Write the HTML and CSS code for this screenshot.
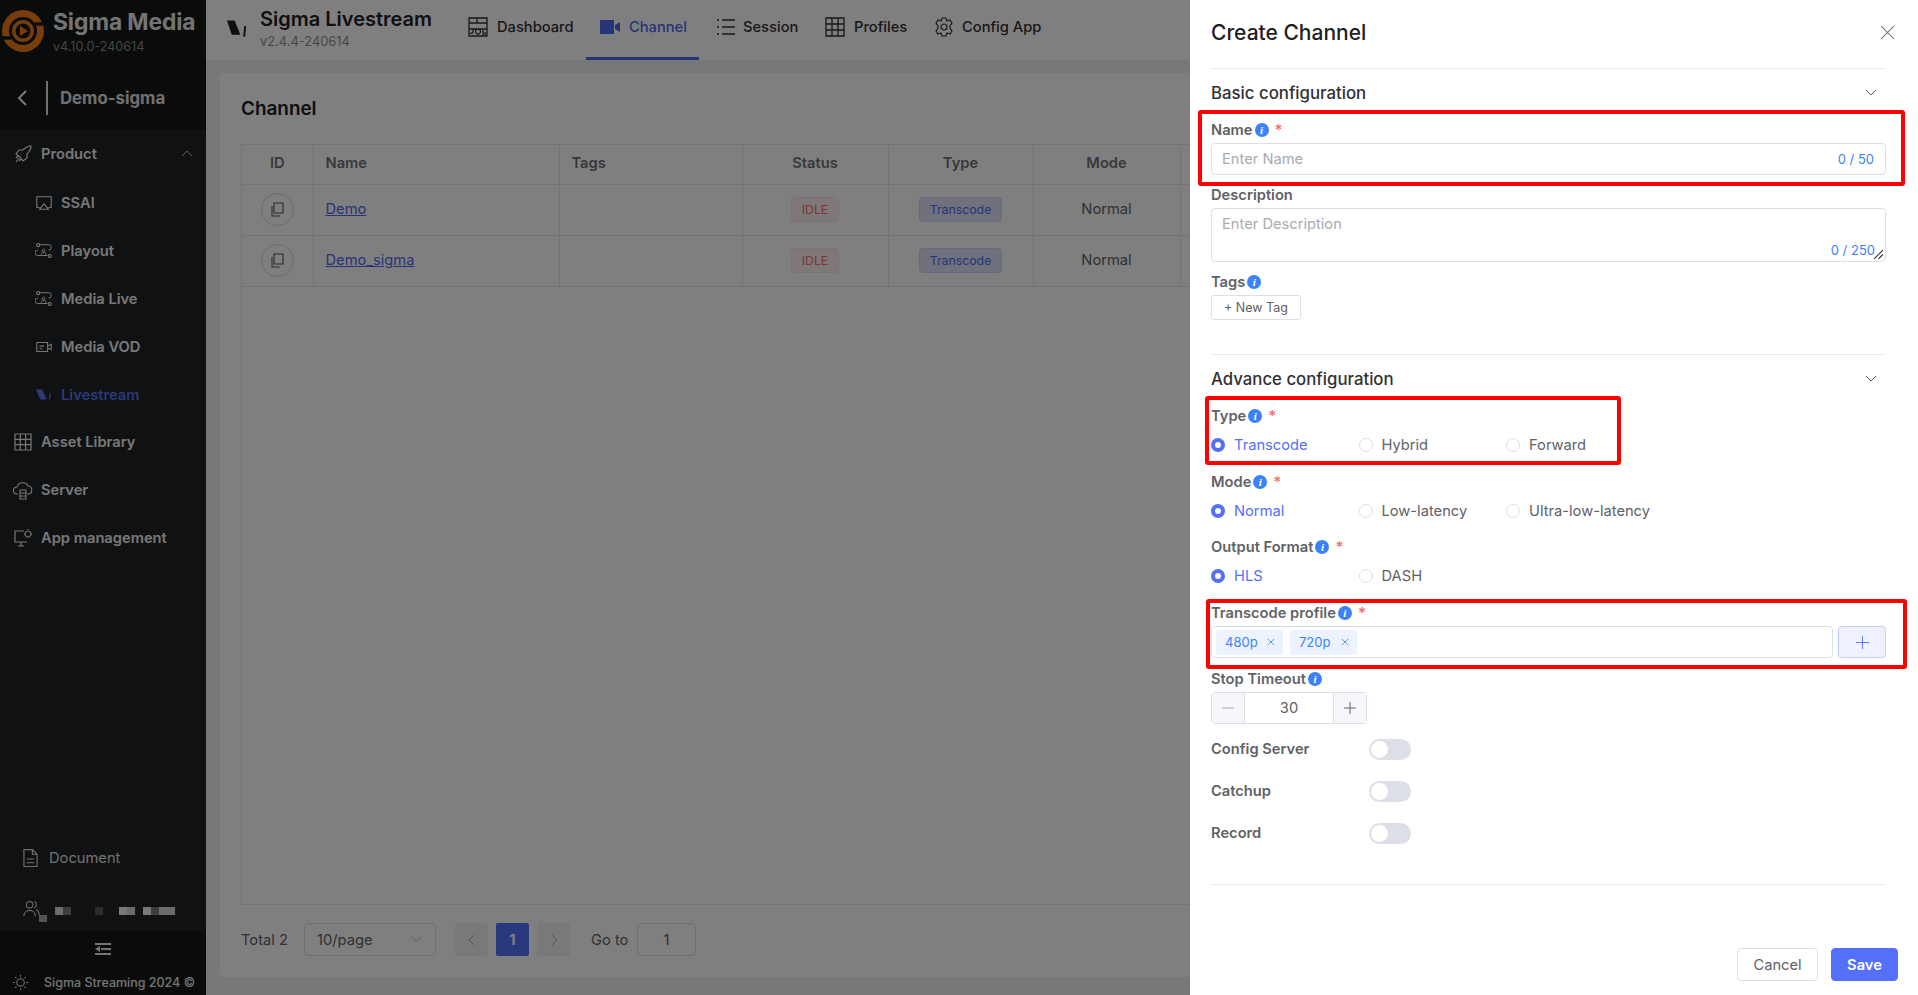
FILE: index.html
```html
<!DOCTYPE html>
<html lang="en">
<head>
<meta charset="utf-8">
<title>Create Channel</title>
<link rel="stylesheet" href="styles.css">
</head>
<body>
<div class="app">
  <aside class="sidebar">
    <div class="side-top">
      <div class="brand">
        <svg class="brand-logo" viewBox="0 0 44 44"><circle cx="22" cy="22" r="21" fill="#f07a1a"/><circle cx="22" cy="22" r="12.500" fill="none" stroke="#141616" stroke-width="3"/><path d="M1 29h9M34 15h9" stroke="#141616" stroke-width="3.500"/><circle cx="22" cy="22" r="7.500" fill="#141616"/><path d="M19 17l8 5-8 5z" fill="#f07a1a"/></svg>
        <div class="brand-text"><div class="brand-name">Sigma Media</div><div class="brand-ver">v4.10.0-240614</div></div>
      </div>
      <div class="back-row">
        <svg class="back-ico" viewBox="0 0 12 18"><path d="M10 2L3 9l7 7" fill="none" stroke="currentColor" stroke-width="2"/></svg>
        <span class="back-sep"></span><span class="back-name">Demo-sigma</span>
      </div>
    </div>
    <nav class="menu">
      <div class="mi head"><svg class="ico" viewBox="0 0 20 20"><path d="M7 13L3 10l3-4h4c2-2 5-4 8-4 0 3-2 6-4 8v4l-4 3-3-4zM6 14l-3 4M5 12l-2 2M8 15l-2 2" fill="none" stroke="currentColor" stroke-width="1.2"/></svg><span class="mi-t">Product</span><svg class="mi-ar" viewBox="0 0 12 8"><path d="M1 6l5-5 5 5" fill="none" stroke="currentColor"/></svg></div>
      <div class="mi sub"><svg class="ico" viewBox="0 0 20 20"><path d="M5 15H2V3h16v12h-3M10 11l5 6H5z" fill="none" stroke="currentColor" stroke-width="1.2"/></svg><span class="mi-t">SSAI</span></div>
      <div class="mi sub"><svg class="ico" viewBox="0 0 20 20"><path d="M5 3h10a3 3 0 0 1 0 6M3 9a3 3 0 0 0 0 6h11M2 2h3v3H2zM15 14h3v3h-3zM7 14c0-4 5-4 5 0M9.500 8a1.500 1.500 0 1 0 .01 0" fill="none" stroke="currentColor" stroke-width="1.100"/></svg><span class="mi-t">Playout</span></div>
      <div class="mi sub"><svg class="ico" viewBox="0 0 20 20"><path d="M5 3h10a3 3 0 0 1 0 6M3 9a3 3 0 0 0 0 6h11M2 2h3v3H2zM15 14h3v3h-3zM7 14c0-4 5-4 5 0M9.500 8a1.500 1.500 0 1 0 .01 0" fill="none" stroke="currentColor" stroke-width="1.100"/></svg><span class="mi-t">Media Live</span></div>
      <div class="mi sub"><svg class="ico" viewBox="0 0 20 20"><path d="M2 5h12v10H2zM14 9l4-2v6l-4-2M5 9h5M5 12h3" fill="none" stroke="currentColor" stroke-width="1.200"/></svg><span class="mi-t">Media VOD</span></div>
      <div class="mi sub active"><svg class="ico" viewBox="0 0 20 20"><path d="M1 4h7l5 11H6z" fill="currentColor"/><path d="M17 8l-1 7" stroke="currentColor" stroke-width="1.500"/></svg><span class="mi-t">Livestream</span></div>
      <div class="mi"><svg class="ico" viewBox="0 0 20 20"><path d="M2 2h16v16H2zM7.300 2v16M12.600 2v16M2 7.300h16M2 12.600h16" fill="none" stroke="currentColor" stroke-width="1.200"/></svg><span class="mi-t">Asset Library</span></div>
      <div class="mi"><svg class="ico" viewBox="0 0 20 20"><path d="M5 14H4a3.500 3.500 0 0 1 0-7c1-5 9-6 11-1 5 0 5 8 0 8h-1M7 10h6v9H7zM7 13h6M7 16h6" fill="none" stroke="currentColor" stroke-width="1.100"/></svg><span class="mi-t">Server</span></div>
      <div class="mi"><svg class="ico" viewBox="0 0 20 20"><path d="M11 3H2v11h12M5 18h6M8 14v4M15 3a3 3 0 1 0 .01 0M15 1v1M15 9v1M11 6h1M18 6h1" fill="none" stroke="currentColor" stroke-width="1.200"/></svg><span class="mi-t">App management</span></div>
    </nav>
    <div class="side-bottom">
      <div class="doc"><svg class="doc-ico" viewBox="0 0 16 20"><path d="M1 1h9l5 5v13H1zM10 1v5h5M4 11h8M4 15h8" fill="none" stroke="currentColor" stroke-width="1.200"/></svg><span>Document</span></div>
      <div class="user">
        <svg class="user-ico" viewBox="0 0 18 18"><circle cx="7" cy="5" r="3.500" fill="none" stroke="currentColor" stroke-width="1.100"/><path d="M1 17c0-8 12-8 12 0M12 1.500c3 1 3 6 0 7M14 10c2 1 3 3 3 6" fill="none" stroke="currentColor" stroke-width="1.100"/></svg>
        <span class="px p0"></span>
        <div class="pixels">
          <span class="px p1"></span><span class="px p2"></span><span class="px gap4"></span><span class="px p3"></span><span class="px gap2"></span><span class="px p4"></span><span class="px p5"></span><span class="px gap1"></span><span class="px p4"></span><span class="px p2"></span><span class="px p5"></span><span class="px p1"></span>
        </div>
      </div>
    </div>
    <div class="side-foot">
      <svg class="collapse" viewBox="0 0 18 14"><path d="M1 1h16v2H1zM1 11h16v2H1zM7 6h10v2H7zM1 7l5-3v6z" fill="currentColor"/></svg>
      <div class="copy">
        <svg class="sun" viewBox="0 0 18 18"><circle cx="9" cy="9" r="4" fill="none" stroke="currentColor" stroke-width="1.100"/><path d="M9 1v2M9 15v2M1 9h2M15 9h2M3.300 3.300l1.400 1.400M13.300 13.300l1.400 1.400M3.300 14.700l1.400-1.400M13.300 4.700l1.400-1.400" stroke="currentColor" stroke-width="1.100"/></svg>
        <span>Sigma Streaming 2024 ©</span>
      </div>
    </div>
  </aside>

  <div class="main">
    <header class="topbar">
      <div class="tb-brand">
        <svg class="tb-logo" viewBox="0 0 22 20"><path d="M0 0h8l6 15H5z" fill="#1d1f22"/><path d="M19 6l-1 11" stroke="#1d1f22" stroke-width="2"/></svg>
        <div><div class="tb-name">Sigma Livestream</div><div class="tb-ver">v2.4.4-240614</div></div>
      </div>
      <nav class="tabs">
        <div class="tab"><svg class="tab-ico" viewBox="0 0 20 20"><path d="M1 1h18v18H1zM1 6h18M9 1v5M1 12h18M5 12v3a2 2 0 0 1-3 1M10 12a2.500 2.500 0 1 0 .01 0M15 13v5M17 15v3" fill="none" stroke="currentColor" stroke-width="1.300"/></svg><span>Dashboard</span></div>
        <div class="tab on"><svg class="tab-ico" viewBox="0 0 20 20"><path d="M0 3h14v14H0zM15 8l5-3v10l-5-3z" fill="currentColor"/></svg><span>Channel</span></div>
        <div class="tab"><svg class="tab-ico" viewBox="0 0 20 20"><path d="M6 3h13M6 10h13M6 17h13M1 3h2M1 10h2M1 17h2" fill="none" stroke="currentColor" stroke-width="1.400"/></svg><span>Session</span></div>
        <div class="tab"><svg class="tab-ico" viewBox="0 0 20 20"><path d="M1 1h18v18H1zM7 1v18M13 1v18M1 7h18M1 13h18" fill="none" stroke="currentColor" stroke-width="1.300"/></svg><span>Profiles</span></div>
        <div class="tab"><svg class="tab-ico" viewBox="0 0 20 20"><path d="M8 1h4l1 3 3-1 2 3-2 3 0 2 2 3-2 3-3-1-1 3H8l-1-3-3 1-2-3 2-3V9L2 6l2-3 3 1z" fill="none" stroke="currentColor" stroke-width="1.200"/><circle cx="10" cy="10" r="3" fill="none" stroke="currentColor" stroke-width="1.200"/></svg><span>Config App</span></div>
      </nav>
    </header>
    <section class="card">
      <h1 class="card-title">Channel</h1>
      <div class="table-box">
        <table class="tbl">
          <colgroup><col class="c-id"><col class="c-name"><col class="c-tags"><col class="c-status"><col class="c-type"><col class="c-mode"><col></colgroup>
          <thead><tr><th>ID</th><th class="l">Name</th><th class="l">Tags</th><th>Status</th><th>Type</th><th>Mode</th><th></th></tr></thead>
          <tbody>
            <tr><td><span class="copy-btn"><svg viewBox="0 0 16 16"><path d="M5 2h9v10H5zM3 5v10h8" fill="none" stroke="currentColor" stroke-width="1.100"/></svg></span></td><td class="l"><a class="lnk">Demo</a></td><td></td><td><span class="badge idle">IDLE</span></td><td><span class="badge trans">Transcode</span></td><td>Normal</td><td></td></tr>
            <tr><td><span class="copy-btn"><svg viewBox="0 0 16 16"><path d="M5 2h9v10H5zM3 5v10h8" fill="none" stroke="currentColor" stroke-width="1.100"/></svg></span></td><td class="l"><a class="lnk">Demo_sigma</a></td><td></td><td><span class="badge idle">IDLE</span></td><td><span class="badge trans">Transcode</span></td><td>Normal</td><td></td></tr>
          </tbody>
        </table>
      </div>
      <div class="pager">
        <span class="pg-total">Total 2</span>
        <div class="pg-select"><span>10/page</span><svg class="chev" viewBox="0 0 12 8"><path d="M1 1l5 5 5-5" fill="none" stroke="currentColor"/></svg></div>
        <span class="pg-btn"><svg class="pg-ar" viewBox="0 0 8 12"><path d="M6 1L1 6l5 5" fill="none" stroke="currentColor"/></svg></span>
        <span class="pg-btn cur">1</span>
        <span class="pg-btn"><svg class="pg-ar" viewBox="0 0 8 12"><path d="M2 1l5 5-5 5" fill="none" stroke="currentColor"/></svg></span>
        <span class="pg-goto">Go to</span>
        <span class="pg-input">1</span>
      </div>
    </section>
  </div>
</div>

<div class="overlay"></div>

<aside class="drawer">
  <div class="dr-head"><h2 class="dr-title">Create Channel</h2><svg class="dr-close" viewBox="0 0 14 14"><path d="M1 1l12 12M13 1L1 13" stroke="currentColor" fill="none"/></svg></div>
  <div class="sec-head"><span>Basic configuration</span><svg class="sec-ar" viewBox="0 0 12 8"><path d="M1 1l5 5 5-5" fill="none" stroke="currentColor"/></svg></div>

  <div class="field first">
    <div class="lab">Name<i class="inf">i</i><b class="req">*</b></div>
    <div class="inp"><span class="ph">Enter Name</span><span class="cnt">0 / 50</span></div>
    <span class="mark m-name"></span>
  </div>
  <div class="field">
    <div class="lab">Description</div>
    <div class="area"><span class="ph">Enter Description</span><span class="cnt area-cnt">0 / 250</span><svg class="grip" viewBox="0 0 10 10"><path d="M1 9l8-8M5 9l4-4" stroke="#333" fill="none"/></svg></div>
  </div>
  <div class="field">
    <div class="lab">Tags<i class="inf">i</i></div>
    <span class="new-tag">+ New Tag</span>
  </div>

  <div class="sec-head sec2"><span>Advance configuration</span><svg class="sec-ar" viewBox="0 0 12 8"><path d="M1 1l5 5 5-5" fill="none" stroke="currentColor"/></svg></div>

  <div class="field first radio-field">
    <div class="lab">Type<i class="inf">i</i><b class="req">*</b></div>
    <div class="radios"><label class="r on"><i class="dot"></i>Transcode</label><label class="r"><i class="dot"></i>Hybrid</label><label class="r"><i class="dot"></i>Forward</label></div>
    <span class="mark m-type"></span>
  </div>
  <div class="field radio-field mode-field">
    <div class="lab">Mode<i class="inf">i</i><b class="req">*</b></div>
    <div class="radios"><label class="r on"><i class="dot"></i>Normal</label><label class="r"><i class="dot"></i>Low-latency</label><label class="r"><i class="dot"></i>Ultra-low-latency</label></div>
  </div>
  <div class="field radio-field">
    <div class="lab">Output Format<i class="inf">i</i><b class="req">*</b></div>
    <div class="radios"><label class="r on"><i class="dot"></i>HLS</label><label class="r"><i class="dot"></i>DASH</label></div>
  </div>
  <div class="field prof-field">
    <div class="lab">Transcode profile<i class="inf">i</i><b class="req">*</b></div>
    <div class="prof-row">
      <div class="prof"><span class="chip">480p<svg viewBox="0 0 10 10"><path d="M1 1l8 8M9 1l-8 8" stroke="currentColor" fill="none"/></svg></span><span class="chip">720p<svg viewBox="0 0 10 10"><path d="M1 1l8 8M9 1l-8 8" stroke="currentColor" fill="none"/></svg></span></div>
      <span class="prof-add"><svg viewBox="0 0 14 14"><path d="M7 0v14M0 7h14" stroke="currentColor" fill="none"/></svg></span>
    </div>
    <span class="mark m-prof"></span>
  </div>
  <div class="field">
    <div class="lab">Stop Timeout<i class="inf">i</i></div>
    <div class="num"><span class="num-btn dim"><svg viewBox="0 0 12 12"><path d="M0 6h12" stroke="currentColor" fill="none"/></svg></span><span class="num-val">30</span><span class="num-btn"><svg viewBox="0 0 12 12"><path d="M6 0v12M0 6h12" stroke="currentColor" fill="none"/></svg></span></div>
  </div>
  <div class="sw-row"><span class="sw-lab">Config Server</span><span class="sw"></span></div>
  <div class="sw-row"><span class="sw-lab">Catchup</span><span class="sw"></span></div>
  <div class="sw-row"><span class="sw-lab">Record</span><span class="sw"></span></div>
  <div class="dr-rule"></div>
  <div class="dr-foot"><span class="btn">Cancel</span><span class="btn pri">Save</span></div>
</aside>
</body>
</html>
```
FILE: styles.css
```css
* { box-sizing: border-box; }
html, body { margin: 0; height: 100%; overflow: hidden; }
body { font-family: Inter, "Liberation Sans", sans-serif; font-size: 14.700px; color: #303133; background: #eef0f3; }
.app { display: flex; height: 995px; }

/* sidebar */
.sidebar { width: 206px; flex: none; display: flex; flex-direction: column; background: #1e2225; color: #fff; }
.side-top { height: 130px; background: #141616; }
.brand { display: flex; align-items: flex-start; height: 64px; padding: 9px 0 0 1px; gap: 8px; }
.brand-logo { width: 44px; height: 44px; flex: none; }
.brand-name { font-size: 22.800px; font-weight: 700; line-height: 26px; color: #e8e8e8; white-space: nowrap; letter-spacing: -0.1px; }
.brand-ver { font-size: 12.600px; line-height: 16px; margin-top: 4px; color: #8d8d8d; }
.back-row { display: flex; align-items: center; height: 34px; margin-top: 17px; padding-left: 16px; }
.back-ico { width: 12px; height: 18px; color: #f0f0f0; }
.back-sep { width: 2px; height: 34px; background: #e0e0e0; margin: 0 12px 0 18px; }
.back-name { font-size: 16.800px; font-weight: 700; color: #e0e0e0; }
.mi { display: flex; align-items: center; height: 47.900px; padding-left: 13px; color: #f0f0f0; font-weight: 600; }
.mi.head { height: 49px; padding-bottom: 1px; }
.mi.sub { padding-left: 35px; }
.mi.active { color: #5b70f0; }
.ico { width: 20px; height: 20px; flex: none; margin-right: 8px; }
.mi.sub .ico { width: 18px; height: 18px; margin-right: 8px; }
.mi-t { white-space: nowrap; }
.mi-ar { width: 12px; height: 8px; margin-left: auto; margin-right: 13px; color: #bbb; }
.side-bottom { margin-top: auto; height: 97px; padding-top: 12px; color: #e0e0e0; }
.doc { display: flex; align-items: center; gap: 11px; padding-left: 23px; height: 24px; }
.doc-ico { width: 15px; height: 20px; }
.user { display: flex; align-items: flex-start; padding-left: 23px; margin-top: 30px; height: 24px; }
.user-ico { width: 17px; height: 17px; flex: none; }
.pixels { display: flex; margin: 7px 0 0 8px; }
.px { display: block; width: 8px; height: 8px; flex: none; }
.p0 { background: #a8a8a8; margin: 15px 0 0 -1px; height: 7px; }
.p1 { background: #d8d8d8; }
.p2 { background: #7a7a7a; }
.p3 { background: #5a5a5a; }
.p4 { background: #f0f0f0; }
.p5 { background: #d8d8d8; }
.gap1 { width: 8px; }
.gap2 { width: 16px; }
.gap4 { width: 24px; }
.side-foot { height: 64px; background: #141616; color: #e8e8e8; flex: none; }
.collapse { display: block; width: 18px; height: 14px; margin: 11px 0 0 94px; }
.copy { display: flex; align-items: center; margin-top: 18px; padding-left: 12px; gap: 15px; font-size: 12.500px; font-weight: 500; white-space: nowrap; }
.sun { width: 17px; height: 17px; flex: none; }

/* main */
.main { flex: 1; display: flex; flex-direction: column; min-width: 0; }
.topbar { display: flex; height: 60px; background: #fff; flex: none; }
.tb-brand { display: flex; align-items: flex-start; padding: 8px 0 0 21px; width: 254px; gap: 12px; }
.tb-logo { width: 21px; height: 20px; margin-top: 12px; flex: none; }
.tb-name { font-size: 20px; font-weight: 600; line-height: 23px; color: #1f2023; white-space: nowrap; }
.tb-ver { font-size: 12.900px; line-height: 16px; margin-top: 3px; color: #8d8f92; }
.tabs { display: flex; margin-left: 8px; }
.tab { display: flex; align-items: center; gap: 9px; height: 60px; padding: 0 0 7px; font-weight: 500; color: #303133; white-space: nowrap; }
.tab:nth-child(1) { width: 118px; }
.tab:nth-child(2) { width: 113px; padding: 0 0 4px 14px; margin-right: 17px; color: #4f6bf0; border-bottom: 3px solid #4f6bf0; }
.tab:nth-child(3) { width: 109px; gap: 7px; }
.tab:nth-child(4) { width: 109px; }
.tab:nth-child(5) { gap: 8px; }
.tab-ico { width: 20px; height: 20px; flex: none; }
.card { flex: 1; margin: 13px 14px 18px; padding: 0 21px; background: #fff; border-radius: 4px; display: flex; flex-direction: column; min-height: 0; }
.card-title { margin: 0; height: 71px; padding-top: 23px; font-size: 18.900px; line-height: 26px; font-weight: 600; color: #1f2023; }
.table-box { height: 761px; border: 1px solid #e4e7ed; flex: none; }
.tbl { width: 100%; border-collapse: collapse; table-layout: fixed; color: #606266; text-align: center; }
.c-id { width: 71px; }
.c-name { width: 246px; }
.c-tags { width: 183px; }
.c-status { width: 146px; }
.c-type { width: 145px; }
.c-mode { width: 147px; }
.tbl th { height: 39px; padding: 0 0 3px; font-weight: 600; border-bottom: 1px solid #e4e7ed; border-right: 1px solid #e4e7ed; color: #707275; }
.tbl td { height: 51px; border-bottom: 1px solid #e4e7ed; border-right: 1px solid #e4e7ed; padding: 0 0 1px; }
.tbl .l { text-align: left; padding-left: 12px; }
.copy-btn { display: inline-flex; align-items: center; justify-content: center; width: 33px; height: 33px; border: 1px solid #d6d8dc; border-radius: 50%; color: #555; vertical-align: middle; }
.copy-btn svg { width: 16px; height: 16px; }
.lnk { color: #4f6bf0; text-decoration: underline; }
.badge { display: inline-block; height: 25px; line-height: 23px; padding: 0 10px; border: 1px solid; border-radius: 4px; font-size: 12.300px; vertical-align: middle; }
.idle { color: #f56c6c; background: #fef0f0; border-color: #fde2e2; }
.trans { color: #4f6bf0; background: #dfe4fb; border-color: #cdd4f8; }
.pager { display: flex; align-items: center; height: 33px; margin-top: 18px; color: #606266; }
.pg-total { width: 63px; }
.pg-select { display: flex; align-items: center; justify-content: space-between; width: 132px; height: 33px; padding: 0 13px 0 12px; border: 1px solid #dcdfe6; border-radius: 4px; }
.chev { width: 11px; height: 7px; color: #a8abb2; }
.pg-btn { display: flex; align-items: center; justify-content: center; width: 33px; height: 33px; margin-left: 8px; background: #f0f2f5; border-radius: 2px; color: #a8abb2; }
.pg-select + .pg-btn { margin-left: 19px; }
.pg-ar { width: 8px; height: 12px; }
.pg-btn.cur { background: #5470fa; color: #fff; font-weight: 700; }
.pg-goto { margin-left: 21px; width: 46px; white-space: nowrap; }
.pg-input { display: flex; align-items: center; justify-content: center; width: 59px; height: 33px; border: 1px solid #dcdfe6; border-radius: 4px; }

/* overlay & drawer */
.overlay { position: fixed; inset: 0; background: rgba(0, 0, 0, 0.5); }
.drawer { position: fixed; top: 0; right: 0; bottom: 0; width: 728px; padding: 0 32px 0 21px; background: #fff; color: #606266; }
.dr-head { display: flex; align-items: center; justify-content: space-between; height: 69px; padding-bottom: 3px; border-bottom: 1px solid #e8eaf0; position: relative; }
.dr-title { margin: 0; font-size: 21px; font-weight: 500; color: #1f2023; }
.dr-close { position: absolute; right: -9px; top: 25px; width: 15px; height: 15px; color: #777; }
.sec-head { display: flex; align-items: center; justify-content: space-between; height: 48px; padding-right: 9px; font-size: 16.800px; font-weight: 500; color: #303133; }
.sec2 { margin-top: 34px; border-top: 1px solid #e8eaf0; height: 49px; }
.sec-ar { width: 12px; height: 8px; color: #606266; }
.field { position: relative; margin-bottom: 9px; }
.first { margin-top: 2px; }
.radio-field { margin-bottom: 10px; }
.mode-field { margin-bottom: 9px; }
.prof-field { margin-bottom: 10px; }
.lab { display: flex; align-items: center; height: 20px; padding-top: 2px; margin-bottom: 4px; font-weight: 600; color: #606266; white-space: nowrap; }
.inf { display: inline-flex; align-items: center; justify-content: center; width: 14px; height: 14px; margin-left: 2px; border-radius: 50%; background: #3b82f6; color: #fff; font: italic 700 11px "Liberation Serif", serif; }
.req { color: #f56c6c; font-weight: 500; margin-left: 6px; font-size: 15.500px; }
.inp { display: flex; align-items: center; justify-content: space-between; height: 32px; padding: 0 11px 0 10px; border: 1px solid #dcdfe6; border-radius: 4px; }
.ph { color: #a8abb2; }
.cnt { color: #3b82f6; font-size: 13px; }
.area { position: relative; height: 54px; padding: 6px 10px; border: 1px solid #dcdfe6; border-radius: 4px; }
.area-cnt { position: absolute; right: 10px; bottom: 3px; }
.grip { position: absolute; right: 1px; bottom: 1px; width: 11px; height: 11px; }
.new-tag { display: inline-flex; align-items: center; height: 25px; padding: 0 12px; border: 1px solid #dcdfe6; border-radius: 3px; font-size: 12.500px; }
.mark { position: absolute; border: 4px solid #ff0000; border-radius: 3px; pointer-events: none; }
.m-name { left: -13px; right: -19px; top: -9px; bottom: -11px; }
.m-type { left: -6px; width: 416px; top: -9px; bottom: -4px; }
.m-prof { left: -5px; right: -21px; top: -3px; bottom: -11px; }
.radios { display: flex; align-items: center; height: 32px; }
.r { display: flex; align-items: center; width: 147.500px; gap: 9px; color: #606266; white-space: nowrap; }
.dot { width: 14px; height: 14px; flex: none; border: 1px solid #dcdfe6; border-radius: 50%; background: #fff; }
.r.on { color: #5470fa; }
.r.on .dot { background: #fff; border: 4.500px solid #5470fa; }
.prof-row { display: flex; gap: 5px; }
.prof { flex: 1; display: flex; align-items: center; gap: 7px; height: 32px; padding-left: 4px; border: 1px solid #dcdfe6; border-radius: 4px; }
.chip { display: flex; align-items: center; justify-content: space-between; width: 67px; height: 25px; padding: 0 8px 0 9px; background: #ecf3fe; border-radius: 3px; color: #3b82f6; font-size: 13px; }
.chip svg { width: 8px; height: 8px; }
.prof-add { display: flex; align-items: center; justify-content: center; width: 48px; height: 32px; color: #5470fa; background: #eef1fe; border: 1px solid #c5cefa; border-radius: 4px; }
.prof-add svg { width: 13px; height: 13px; }
.num { display: flex; width: 156px; height: 32px; border: 1px solid #dcdfe6; border-radius: 4px; }
.num-btn { display: flex; align-items: center; justify-content: center; width: 33px; flex: none; background: #f5f7fa; color: #606266; }
.num-btn:first-child { border-right: 1px solid #dcdfe6; }
.num-btn:last-child { border-left: 1px solid #dcdfe6; }
.num-btn svg { width: 12px; height: 12px; }
.num-btn.dim { color: #a8abb2; }
.num-val { flex: 1; text-align: center; line-height: 30px; }
.sw-row { display: flex; align-items: center; height: 32px; margin-bottom: 10px; font-weight: 600; }
.sw-lab { width: 158px; }
.sw { position: relative; width: 42px; height: 21px; background: #dcdfe6; border-radius: 11px; }
.sw::after { content: ""; position: absolute; left: 2px; top: 2px; width: 17px; height: 17px; border-radius: 50%; background: #fff; }
.dr-rule { margin-top: 35px; border-top: 1px solid #e8eaf0; }
.dr-foot { position: absolute; right: 20px; top: 948px; display: flex; gap: 13px; }
.btn { display: flex; align-items: center; justify-content: center; width: 81px; height: 33px; border: 1px solid #dcdfe6; border-radius: 4px; }
.btn.pri { width: 67px; background: #5470fa; border-color: #5470fa; color: #fff; font-weight: 600; }
```
